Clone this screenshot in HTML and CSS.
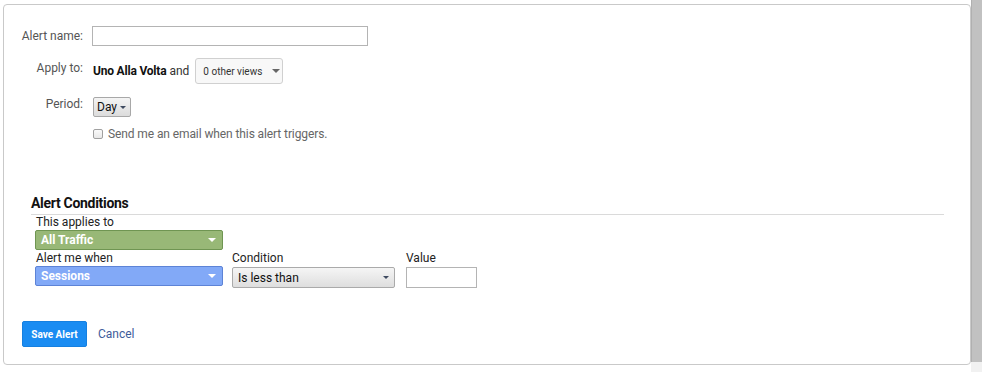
FILE: index.html
```html
<!DOCTYPE html>
<html lang="en">
<head>
    <meta charset="UTF-8">
    <meta name="viewport" content="width=device-width, initial-scale=1.0">
    <title>Create Alert</title>
    <link rel="stylesheet" href="styles.css">
</head>
<body>
    <div class="page">
        <div class="panel">
            <div class="row row-name">
                <label class="lbl">Alert name:</label>
                <input type="text" class="name-input">
            </div>
            <div class="row row-apply">
                <span class="lbl">Apply to:</span>
                <span class="view-name">Uno Alla Volta</span>
                <span class="and">and</span>
                <div class="views-btn">0 other views <span class="caret caret-gray"></span></div>
            </div>
            <div class="row row-period">
                <span class="lbl">Period:</span>
                <div class="day-btn">Day <span class="caret caret-dark"></span></div>
            </div>
            <div class="row row-check">
                <span class="lbl"></span>
                <span class="check"></span>
                <span class="check-text">Send me an email when this alert triggers.</span>
            </div>

            <div class="conditions">
                <h3 class="cond-title">Alert Conditions</h3>
                <div class="cond-label">This applies to</div>
                <div class="pill pill-green">All Traffic <span class="caret caret-white"></span></div>
                <div class="cond-cols">
                    <div class="col col-metric">
                        <div class="cond-label">Alert me when</div>
                        <div class="pill pill-blue">Sessions <span class="caret caret-white"></span></div>
                    </div>
                    <div class="col col-cond">
                        <div class="cond-label">Condition</div>
                        <div class="select">Is less than <span class="caret caret-dark"></span></div>
                    </div>
                    <div class="col col-value">
                        <div class="cond-label">Value</div>
                        <input type="text" class="value-input">
                    </div>
                </div>
            </div>

            <div class="actions">
                <div class="save-btn">Save Alert</div>
                <a class="cancel">Cancel</a>
            </div>
        </div>
        <div class="scrollbar">
            <div class="thumb"></div>
            <div class="track"></div>
        </div>
    </div>
</body>
</html>
```

FILE: styles.css
```css
*{margin: 0; padding: 0; box-sizing: border-box;}
body{
    font-family: Roboto, "Liberation Sans", Arial, sans-serif;
    font-size: 12px;
    color: #222;
    background: #fff;
}
.page{
    display: flex;
    height: 372px;
}
.panel{
    width: 968px;
    height: 361px;
    margin: 4px 0 0 3px;
    border: 1px solid #c9c9c9;
    border-radius: 4px;
    padding-top: 21px;
}
.scrollbar{
    width: 11px;
    display: flex;
    flex-direction: column;
}
.thumb{
    height: 362px;
    background: #c1c1c1;
    border-left: 1px solid #b0b0b0;
}
.track{
    flex: 1;
    background: #f1f1f1;
}

/* top form */
.row{
    display: flex;
    align-items: center;
}
.lbl{
    width: 79px;
    text-align: right;
    color: #555;
    margin-right: 9px;
    flex-shrink: 0;
}
.name-input{
    width: 276px;
    height: 20px;
    border: 1px solid #b4b4b4;
    outline: none;
}
.row-apply{
    margin-top: 12px;
    height: 26px;
}
.row-apply .lbl{
    align-self: flex-start;
    padding-top: 3px;
}
.view-name{
    font-weight: bold;
    color: #111;
    margin-left: 1px;
    letter-spacing: -0.2px;
}
.and{
    margin-left: 3px;
    color: #333;
}
.views-btn{
    margin-left: 6px;
    width: 88px;
    height: 26px;
    border: 1px solid #d0d0d0;
    border-radius: 3px;
    background: #f8f8f8;
    font-size: 10px;
    color: #333;
    display: flex;
    align-items: center;
    padding-left: 7px;
}
.views-btn .caret{
    margin-left: 10px;
}
.row-period{
    margin-top: 13px;
    height: 20px;
}
.row-period .lbl{
    align-self: flex-start;
}
.day-btn{
    margin-left: 1px;
    width: 38px;
    height: 20px;
    border: 1px solid #a8a8a8;
    border-radius: 2px;
    background: linear-gradient(#f4f4f4, #dcdcdc);
    color: #111;
    display: flex;
    align-items: center;
    padding-left: 3px;
}
.day-btn .caret{
    margin-left: 3px;
}
.row-check{
    margin-top: 9px;
    height: 16px;
}
.check{
    margin-left: 1px;
    width: 10px;
    height: 10px;
    border: 1px solid #a0a0a0;
    border-radius: 2px;
    background: linear-gradient(#fafafa, #e8e8e8);
}
.check-text{
    margin-left: 5px;
    color: #666;
    letter-spacing: -0.1px;
}

/* carets */
.caret{
    display: inline-block;
    width: 0;
    height: 0;
    border-left: 4px solid transparent;
    border-right: 4px solid transparent;
    border-top: 4px solid #777;
}
.caret-gray{border-top-color: #666;}
.caret-dark{
    border-left-width: 3px;
    border-right-width: 3px;
    border-top: 3px solid #3e4a60;
}
.caret-white{border-top-color: #fff;}

/* conditions */
.conditions{
    margin: 53px 26px 0 27px;
}
.cond-title{
    font-size: 14px;
    font-weight: bold;
    color: #111;
    line-height: 16px;
    padding-bottom: 3px;
    border-bottom: 1px solid #dadada;
    letter-spacing: -0.3px;
}
.cond-label{
    padding-left: 5px;
    line-height: 15px;
    color: #222;
}
.pill{
    margin-left: 4px;
    width: 188px;
    height: 20px;
    border-radius: 2px;
    color: #fff;
    font-weight: bold;
    display: flex;
    align-items: center;
    justify-content: space-between;
    padding: 0 6px 0 5px;
}
.pill-green{
    background: #98b877;
    border: 1px solid #6f9552;
}
.pill-blue{
    background: #82a9f7;
    border: 1px solid #5d83d6;
}
.cond-cols{
    display: flex;
    margin-top: 1px;
}
.col-cond{
    margin-left: 9px;
}
.col-cond .cond-label{
    padding-left: 0;
}
.col-value{
    margin-left: 11px;
}
.col-value .cond-label{
    padding-left: 0;
}
.select{
    margin-top: 1px;
    width: 163px;
    height: 21px;
    border: 1px solid #aaa;
    border-radius: 2px;
    background: linear-gradient(#f5f5f5, #dedede);
    color: #111;
    display: flex;
    align-items: center;
    justify-content: space-between;
    padding: 0 5px 0 5px;
}
.value-input{
    margin-top: 1px;
    width: 71px;
    height: 21px;
    border: 1px solid #b4b4b4;
    outline: none;
}

/* actions */
.actions{
    display: flex;
    align-items: center;
    margin: 33px 0 0 18px;
}
.save-btn{
    width: 65px;
    height: 26px;
    line-height: 26px;
    text-align: center;
    background: #1a8cf2;
    border: 1px solid #1680e0;
    border-radius: 2px;
    color: #fff;
    font-size: 10px;
    font-weight: bold;
}
.cancel{
    margin-left: 11px;
    color: #3e5c9a;
}
```
